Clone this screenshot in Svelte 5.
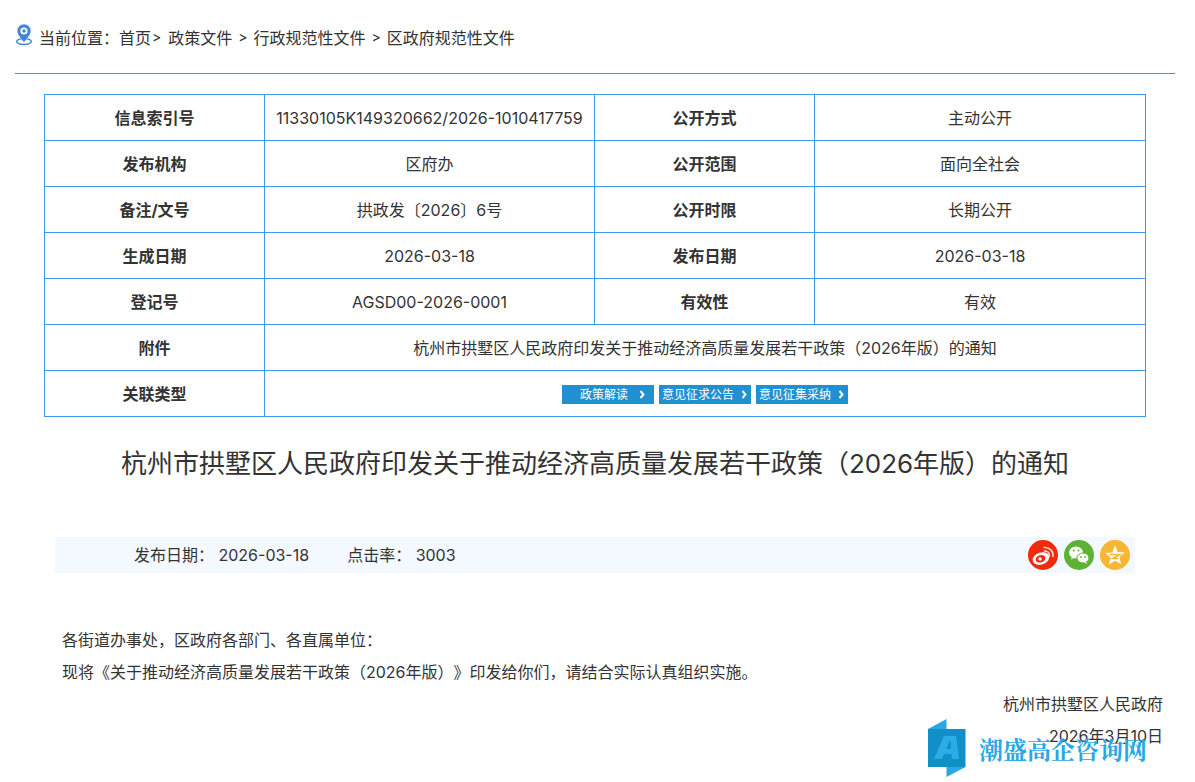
<script>
	const rows = [
		['信息索引号', '11330105K149320662/2026-1010417759', '公开方式', '主动公开'],
		['发布机构', '区府办', '公开范围', '面向全社会'],
		['备注/文号', '拱政发〔2026〕6号', '公开时限', '长期公开'],
		['生成日期', '2026-03-18', '发布日期', '2026-03-18'],
		['登记号', 'AGSD00-2026-0001', '有效性', '有效']
	];
	const title = '杭州市拱墅区人民政府印发关于推动经济高质量发展若干政策（2026年版）的通知';
	const links = ['政策解读', '意见征求公告', '意见征集采纳'];
</script>

<div class="page">
	<div class="crumb">
		<svg class="pin" width="18" height="23" viewBox="0 0 18 23">
			<ellipse cx="9" cy="18.500" rx="7.300" ry="3" fill="none" stroke="#3f86d8" stroke-width="1.500" />
			<path d="M9 1a7 7 0 0 0-7 7C2 12.500 9 19.500 9 19.500S16 12.500 16 8a7 7 0 0 0-7-7z" fill="#3f86d8" stroke="#fff" stroke-width=".6" />
			<circle cx="9" cy="8" r="3.600" fill="#fff" />
			<circle cx="9" cy="8" r="1.800" fill="#3f86d8" />
		</svg>
		<span class="here">当前位置：</span>
		<span>首页</span><span class="sep first">&gt;</span>
		<span>政策文件</span><span class="sep">&gt;</span>
		<span>行政规范性文件</span><span class="sep">&gt;</span>
		<span>区政府规范性文件</span>
	</div>

	<table>
		<colgroup>
			<col class="c1" /><col class="c2" /><col class="c3" /><col class="c4" />
		</colgroup>
		<tbody>
			{#each rows as r}
				<tr>
					<th>{r[0]}</th>
					<td>{r[1]}</td>
					<th>{r[2]}</th>
					<td>{r[3]}</td>
				</tr>
			{/each}
			<tr>
				<th>附件</th>
				<td colspan="3">{title}</td>
			</tr>
			<tr>
				<th>关联类型</th>
				<td colspan="3">
					<div class="links">
						{#each links as l, i}
							<span class="tag" class:wide={i === 0}>
								<span>{l}</span>
								<svg width="7" height="9" viewBox="0 0 7 9"><path d="M1.500 1l3 3.500-3 3.500" fill="none" stroke="#fff" stroke-width="2" /></svg>
							</span>
						{/each}
					</div>
				</td>
			</tr>
		</tbody>
	</table>

	<h1>{title}</h1>

	<div class="meta">
		<div class="info">
			<span>发布日期：&nbsp;2026-03-18</span>
			<span>点击率：&nbsp;3003</span>
		</div>
		<div class="share">
			<svg width="30" height="30" viewBox="0 0 30 30">
				<circle cx="15" cy="15" r="15" fill="#f02a0c" />
				<ellipse cx="13" cy="18.500" rx="8.500" ry="6" fill="#fff" transform="rotate(-18 13 18.500)" />
				<ellipse cx="12.500" cy="18.800" rx="5" ry="3.600" fill="#f02a0c" transform="rotate(-18 12.500 18.800)" />
				<circle cx="12" cy="19" r="1.700" fill="#fff" />
				<path d="M16 7.500a8 8 0 0 1 9 9M16.500 11a4.500 4.500 0 0 1 5 5" fill="none" stroke="#fff" stroke-width="1.500" stroke-linecap="round" opacity=".85" />
			</svg>
			<svg width="30" height="30" viewBox="0 0 30 30">
				<circle cx="15" cy="15" r="15" fill="#5bb234" />
				<ellipse cx="12" cy="12.500" rx="7" ry="6" fill="#fff" />
				<path d="M8 16.500l-1 3 4-2z" fill="#fff" />
				<ellipse cx="19" cy="18" rx="6" ry="5" fill="#fff" stroke="#5bb234" stroke-width="1" />
				<path d="M22 22l1.500 2-3.500-1.500z" fill="#fff" />
				<circle cx="9.800" cy="10.500" r="1" fill="#5bb234" />
				<circle cx="14.500" cy="10.500" r="1" fill="#5bb234" />
				<circle cx="17" cy="17" r=".9" fill="#5bb234" />
				<circle cx="21" cy="17" r=".9" fill="#5bb234" />
			</svg>
			<svg width="30" height="30" viewBox="0 0 30 30">
				<circle cx="15" cy="15" r="15" fill="#f7b733" />
				<path d="M15 5.500l2.700 6.500 7 .5-5.400 4.500 1.800 6.900L15 20.700l-6.100 3.700 1.800-6.900-5.400-4.500 7-.5z" fill="#fff" />
				<path d="M9.500 14.500h10l-6.500 4h5" fill="none" stroke="#f7b733" stroke-width="1.700" />
			</svg>
		</div>
	</div>

	<div class="body">
		<p>各街道办事处，区政府各部门、各直属单位：</p>
		<p>现将《关于推动经济高质量发展若干政策（2026年版）》印发给你们，请结合实际认真组织实施。</p>
		<p class="right">杭州市拱墅区人民政府</p>
		<p class="right">2026年3月10日</p>
	</div>

	<div class="mark">
		<svg width="38" height="58" viewBox="0 0 38 58">
			<path d="M0 10L18.500 0V10z" fill="#2aa8e4" />
			<path d="M18.500 48V58L37.500 48z" fill="#2aa8e4" />
			<rect y="10" width="37.500" height="38" fill="#1090c6" />
			<path d="M6 40L16 17H28L31 40H24L23.500 35H16L14 40zM18.200 30H23L22.500 22H21.500z" fill="#2cace6" fill-rule="evenodd" />
		</svg>
		<span>潮盛高企咨询网</span>
	</div>
</div>

<style>
	:global(body) {
		margin: 0;
		background: #fff;
	}

	.page {
		position: relative;
		height: 782px;
		overflow: hidden;
		font-family: Inter, 'Noto Sans CJK SC', sans-serif;
		font-size: 16px;
		color: #333;
		box-sizing: border-box;
		padding: 0 20px 0 15px;
		text-spacing-trim: space-all;
	}

	.crumb {
		height: 74px;
		box-sizing: border-box;
		border-bottom: 1px solid #3f94e4;
		display: flex;
		align-items: center;
		white-space: nowrap;
	}

	.pin {
		margin: -4px 6px 0 0;
	}

	.sep {
		margin: 0 6px;
		font-size: 14px;
	}

	.sep.first {
		margin: 0 7px 0 1px;
	}

	table {
		margin: 20px 0 0 29px;
		width: 1102px;
		table-layout: fixed;
		border-collapse: collapse;
	}

	.c1 {
		width: 220px;
	}

	.c2 {
		width: 330px;
	}

	.c3 {
		width: 220px;
	}

	tr {
		height: 46px;
	}

	th,
	td {
		border: 1px solid #3a9cf0;
		padding: 0;
		text-align: center;
		font-size: 16px;
		line-height: 20px;
		color: #333;
	}

	th {
		font-weight: 700;
	}

	.links {
		display: flex;
		justify-content: center;
		gap: 5px;
		margin-top: 2px;
	}

	.tag {
		width: 92px;
		height: 19px;
		box-sizing: border-box;
		padding: 0 3px;
		background: #2090d0;
		color: #fff;
		font-size: 12px;
		line-height: 19px;
		display: flex;
		align-items: center;
		justify-content: space-between;
	}

	.tag.wide {
		padding: 0 8px 0 18px;
	}

	h1 {
		margin: 27px 0 0;
		padding-left: 29px;
		width: 1102px;
		text-align: center;
		font-size: 26px;
		line-height: 40px;
		font-weight: 400;
		color: #333;
	}

	.meta {
		margin: 53px 0 0 40px;
		width: 1080px;
		height: 36px;
		background: #f3f9fe;
		display: flex;
		align-items: center;
		justify-content: space-between;
	}

	.info {
		display: flex;
		gap: 38px;
		padding-left: 79px;
		margin-top: -2px;
	}

	.share {
		display: flex;
		gap: 6px;
		margin-right: 5px;
	}

	.body {
		margin: 51px 12px 0 47px;
	}

	.body p {
		margin: 0;
		line-height: 32px;
	}

	.body .right {
		text-align: right;
	}

	.mark {
		position: absolute;
		left: 928px;
		top: 719px;
		display: flex;
		align-items: center;
		gap: 13px;
		color: #29a8e4;
		font-family: 'Noto Serif CJK SC', 'Noto Sans CJK SC', serif;
		font-size: 24px;
		font-weight: 700;
		white-space: nowrap;
	}
</style>
